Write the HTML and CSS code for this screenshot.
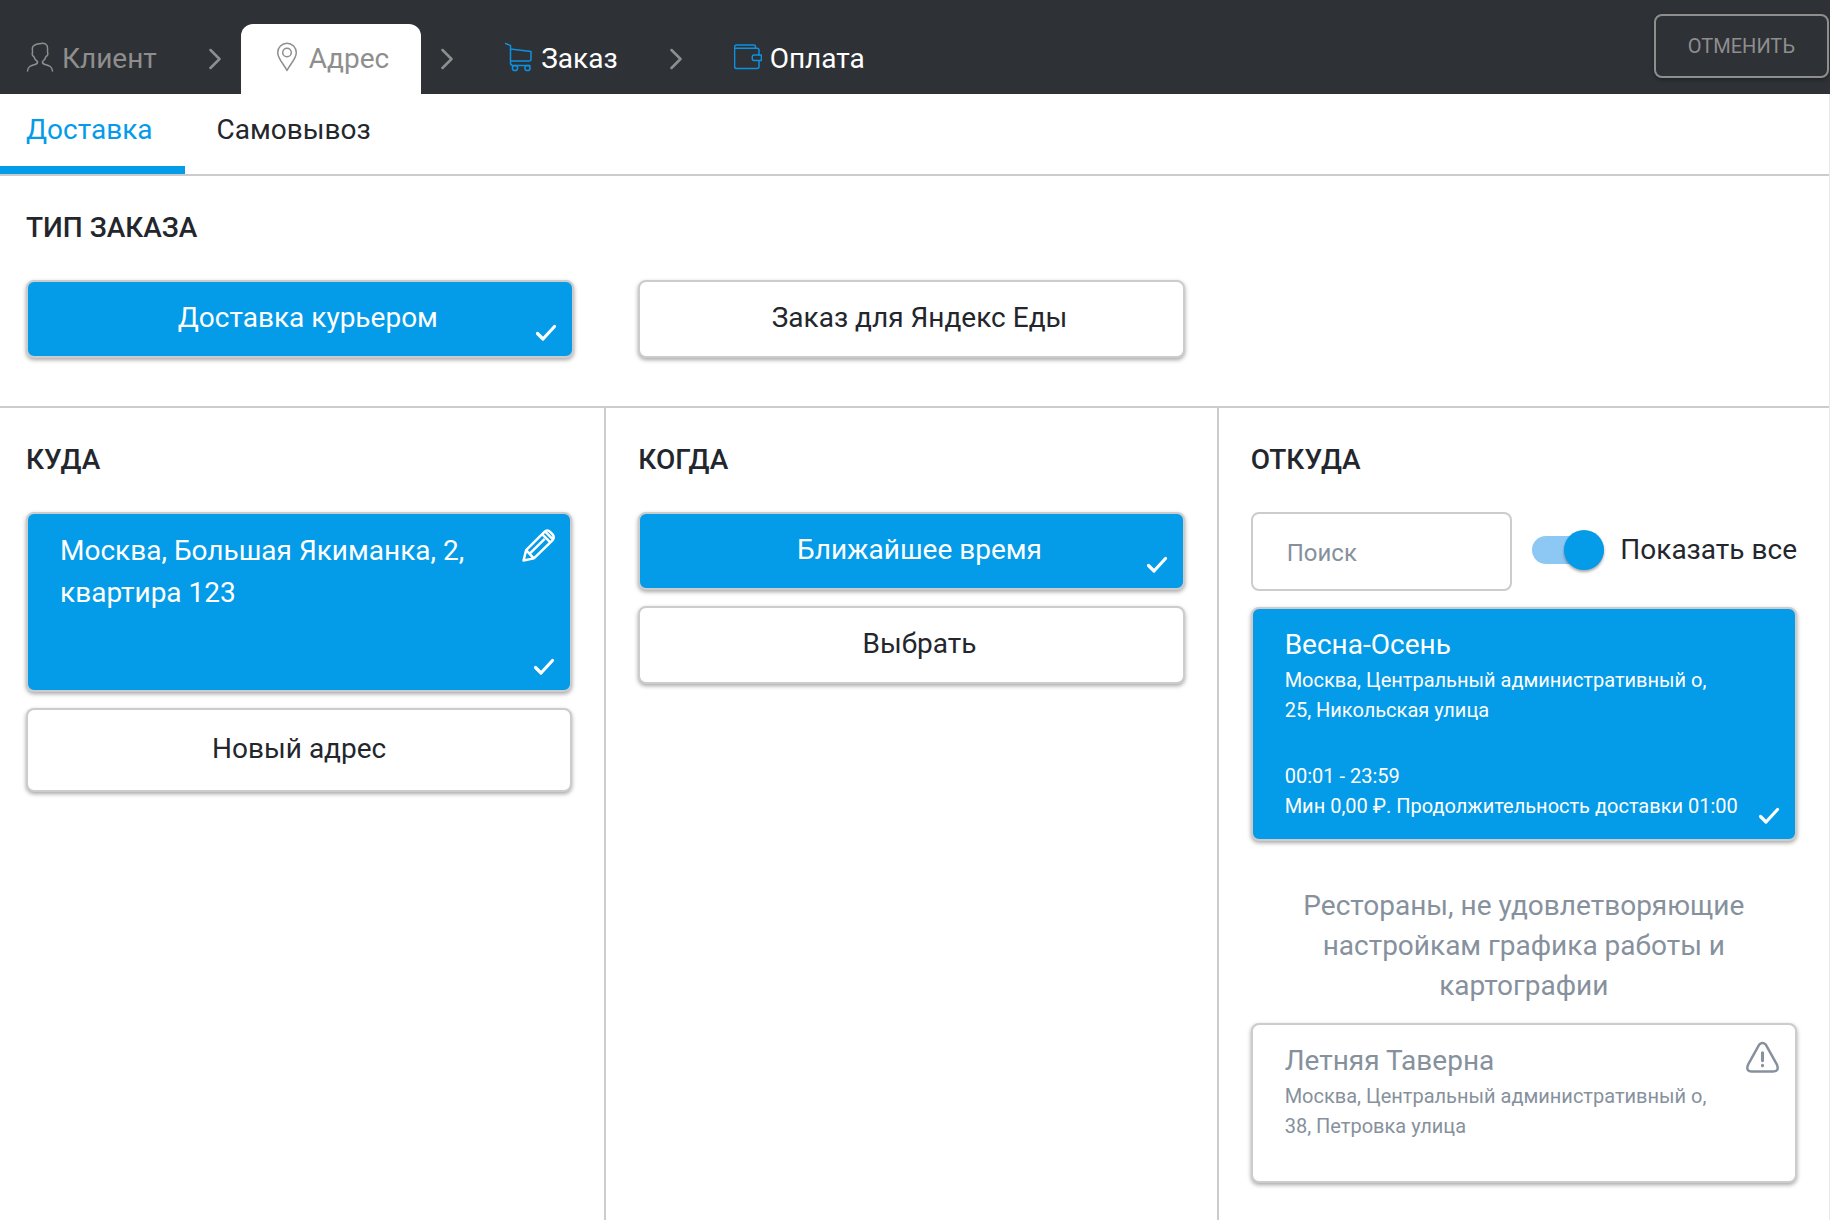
FILE: index.html
```html
<!DOCTYPE html>
<html lang="ru">
<head>
<meta charset="utf-8">
<title>Адрес заказа</title>
<meta name="viewport" content="width=device-width, initial-scale=1">
<link rel="stylesheet" href="styles.css">
</head>
<body>
<svg class="sprite" aria-hidden="true">
  <symbol id="check" viewBox="0 0 22 18"><path d="M2.500 9.500 8 15 19.500 2.500" fill="none" stroke="currentColor" stroke-width="3.200" stroke-linecap="round" stroke-linejoin="round"/></symbol>
  <symbol id="chevron" viewBox="0 0 12 22"><path d="M1.500 2 10.500 11 1.500 20" fill="none" stroke="currentColor" stroke-width="2.500" stroke-linecap="round" stroke-linejoin="round"/></symbol>
</svg>

<header class="header">
  <nav class="steps" aria-label="Шаги заказа">
    <a class="step step-done" href="#client">
      <svg class="step-icon" viewBox="0 0 28 30" aria-hidden="true"><path d="M6.500 5.500C8 1.800 12 2.200 15 1.500c3.500-.6 6.800 1 6.500 4.500.2 2-.2 3 .2 5 .4 2-.5 3-1.700 3.500-.7 2.500-2 4-3.500 5-.3 1.800.7 2.500 2.500 3 4.500 1.200 7 2 7.500 6.500M6.500 5.500c-.3 1.500 0 3 0 4.500-.6 2.500 0 4 1.300 4.500.7 2.500 2 4 3.700 5 .3 1.800-.7 2.500-2.500 3-4.500 1.200-7 2-7.500 6.500"/></svg>
      <span>Клиент</span>
    </a>
    <svg class="chevron" aria-hidden="true"><use href="#chevron"/></svg>
    <a class="step step-active" href="#address" aria-current="step">
      <svg class="step-icon" viewBox="0 0 28 30" aria-hidden="true"><path d="M14 28.500C11 22 4.700 17 4.700 10.500a9.300 9.300 0 0 1 18.600 0C23.300 17 17 22 14 28.500Z"/><circle cx="14" cy="10.500" r="4.300"/></svg>
      <span>Адрес</span>
    </a>
    <svg class="chevron" aria-hidden="true"><use href="#chevron"/></svg>
    <a class="step" href="#order">
      <svg class="step-icon" viewBox="0 0 28 30" aria-hidden="true"><path d="M.5 1.500 5.500 3.500V21q0 2.500 2.500 2.500H25M5.500 7 26 9.500V17q0 2-2 2H5.500"/><circle cx="10" cy="26" r="2.600"/><circle cx="22.500" cy="26" r="2.600"/></svg>
      <span>Заказ</span>
    </a>
    <svg class="chevron" aria-hidden="true"><use href="#chevron"/></svg>
    <a class="step" href="#payment">
      <svg class="step-icon" viewBox="0 0 28 30" aria-hidden="true"><path d="M21.500 6V4.500Q21.500 3 20 3H2.500Q.6 3 .6 5V24.500q0 2 2 2H23q2 0 2-2V18.500M.6 5.500Q1 6.300 3 6.300H23q2 0 2 2V13"/><path d="M20 13h7.400v5.500H20q-1.700 0-1.700-1.500v-2.500Q18.300 13 20 13Z"/></svg>
      <span>Оплата</span>
    </a>
  </nav>
  <button class="cancel" type="button">ОТМЕНИТЬ</button>
</header>

<main class="main">
  <nav class="tabs" aria-label="Способ получения">
    <a class="tab tab-active" href="#delivery" aria-current="page">Доставка</a>
    <a class="tab" href="#pickup">Самовывоз</a>
  </nav>

  <section class="order-type">
    <h2 class="title">ТИП ЗАКАЗА</h2>
    <div class="type-grid">
      <button class="option selected" type="button">Доставка курьером<svg class="check" aria-hidden="true"><use href="#check"/></svg></button>
      <button class="option" type="button">Заказ для Яндекс Еды</button>
    </div>
  </section>

  <div class="columns">
    <section class="column">
      <h2 class="title">КУДА</h2>
      <div class="stack">
        <article class="card card-address selected">
          <p class="address">Москва, Большая Якиманка, 2, квартира 123</p>
          <button class="corner-button" type="button" aria-label="Изменить адрес">
            <svg class="corner-icon" viewBox="0 0 32 32" aria-hidden="true"><path d="M1.500 30.500 4 20.500 21.500 3Q24.500 0 27.500 3L29.500 5Q32 8 29.500 11L11.500 28.500ZM4 20.500 11.500 28.500M19.500 5 27.500 13M22.500 2.500 30 10M8 23.500 22 9.500"/></svg>
          </button>
          <svg class="check" aria-hidden="true"><use href="#check"/></svg>
        </article>
        <button class="option option-new" type="button">Новый адрес</button>
      </div>
    </section>

    <section class="column">
      <h2 class="title">КОГДА</h2>
      <div class="stack">
        <button class="option selected" type="button">Ближайшее время<svg class="check" aria-hidden="true"><use href="#check"/></svg></button>
        <button class="option" type="button">Выбрать</button>
      </div>
    </section>

    <section class="column">
      <h2 class="title">ОТКУДА</h2>
      <div class="stack">
        <div class="filter">
          <input class="search" type="search" placeholder="Поиск" aria-label="Поиск">
          <label class="switch"><input class="switch-input" type="checkbox" role="switch" checked><span>Показать все</span></label>
        </div>
        <article class="card card-open selected">
          <h3 class="place">Весна-Осень</h3>
          <p class="details">Москва, Центральный административный о, 25, Никольская улица</p>
          <p class="terms">00:01 - 23:59<br>Мин 0,00 ₽. Продолжительность доставки 01:00</p>
          <svg class="check" aria-hidden="true"><use href="#check"/></svg>
        </article>
      </div>
      <p class="note">Рестораны, не удовлетворяющие настройкам графика работы и картографии</p>
      <article class="card card-closed">
        <h3 class="place">Летняя Таверна</h3>
        <p class="details">Москва, Центральный административный о, 38, Петровка улица</p>
        <svg class="corner-icon corner-warning" viewBox="0 0 32 32" aria-hidden="true"><path d="M12.800 3.500Q16 .2 19.200 3.500L30 23q2.500 6.500-3.500 6.500H5.500Q-.5 29.500 2 23Z"/><path d="M16 11.500v7.500M16 23.500v.5" stroke-width="3" stroke-linecap="round"/></svg>
      </article>
    </section>
  </div>
</main>
</body>
</html>
```
FILE: styles.css
```css
*, *::before, *::after { box-sizing: border-box; }

html { height: 100%; }

body {
  display: flex;
  flex-direction: column;
  min-height: 100%;
  margin: 0;
  background: #fff;
  color: #23262c;
  font: 400 28px/40px Roboto, "Liberation Sans", sans-serif;
}

h2, h3, p { margin: 0; }
a { color: inherit; text-decoration: none; }
button, input { font: inherit; color: inherit; }
button { cursor: pointer; }
.sprite { display: none; }

/* Header */
.header {
  display: flex;
  justify-content: space-between;
  align-items: flex-start;
  background: #2e3136;
}

.steps {
  display: flex;
  align-items: center;
  padding-top: 24px;
  color: #fff;
}

.step {
  display: flex;
  align-items: center;
  gap: 8px;
  height: 70px;
  padding: 0 32px;
}
.step:first-child { padding-left: 26px; }
.step-done { color: #8e8e8e; }
.step-active {
  border-radius: 12px 12px 0 0;
  background: #fff;
  color: #8e8e8e;
}

.step-icon {
  width: 28px;
  height: 30px;
  margin-bottom: 4px;
  fill: none;
  stroke: #0c92e0;
  stroke-width: 1.5;
  stroke-linejoin: round;
  stroke-linecap: round;
}
.step-done .step-icon, .step-active .step-icon { stroke: #8e8e8e; }

.chevron {
  width: 12px;
  height: 22px;
  margin: 0 20px;
  color: #8e8e8e;
}

.cancel {
  height: 64px;
  margin: 14px 1px 0 0;
  padding: 0 32px;
  border: 2px solid #8e8e8e;
  border-radius: 8px;
  background: transparent;
  box-shadow: 0 2px 4px rgba(0, 0, 0, .3);
  color: #8e8e8e;
  font-size: 20px;
}

/* Tabs */
.main {
  display: flex;
  flex-direction: column;
  flex: 1;
  border-right: 1px solid #e8e8e8;
}

.tabs {
  display: flex;
  border-bottom: 2px solid #ccc;
}
.tab {
  height: 80px;
  padding: 16px 32px 0;
  border-bottom: 8px solid transparent;
}
.tab:first-child { padding-left: 26px; }
.tab-active {
  border-bottom-color: #049be8;
  color: #049be8;
}

/* Sections */
.title {
  margin-bottom: 32px;
  font-size: 28px;
  font-weight: 500;
  line-height: 40px;
}

.order-type {
  padding: 32px 32px 48px 26px;
  border-bottom: 2px solid #ccc;
}
.type-grid {
  display: grid;
  grid-template-columns: repeat(3, 1fr);
  gap: 64px;
}

.columns {
  display: flex;
  flex: 1;
}
.column {
  flex: 1 1 0;
  min-width: 0;
  padding: 32px;
}
.column:first-child { padding-left: 26px; }
.column + .column { border-left: 2px solid #ccc; }
.stack {
  display: flex;
  flex-direction: column;
  gap: 16px;
}

/* Options and cards */
.option, .card {
  position: relative;
  border: 2px solid #ccc;
  border-radius: 8px;
  background: #fff;
  box-shadow: 0 2px 4px rgba(0, 0, 0, .35);
}
.option {
  width: 100%;
  height: 78px;
  padding: 0 32px 2px 48px;
}
.option-new {
  height: 84px;
  padding-left: 32px;
}
.option.selected, .card.selected {
  background: #049be8;
  color: #fff;
}
.card { padding: 16px 32px; }

.check {
  position: absolute;
  right: 15px;
  bottom: 14px;
  width: 22px;
  height: 18px;
}

.card-address {
  min-height: 180px;
  padding-right: 96px;
}
.address { line-height: 42px; }

.corner-button {
  position: absolute;
  top: 15px;
  right: 15px;
  display: flex;
  padding: 0;
  border: 0;
  background: none;
}
.corner-icon {
  width: 33px;
  height: 33px;
  fill: none;
  stroke: currentColor;
  stroke-width: 2.400;
  stroke-linejoin: round;
}
.corner-warning {
  position: absolute;
  top: 16px;
  right: 16px;
}

/* Restaurant search */
.filter {
  display: flex;
  align-items: center;
  gap: 20px;
}
.search {
  flex: 1;
  min-width: 0;
  height: 79px;
  padding: 2px 34px 0;
  border: 2px solid #ccc;
  border-radius: 8px;
  background: #fff;
  font-size: 24px;
}
.search::placeholder { color: #86919d; opacity: 1; }

.switch {
  display: flex;
  align-items: center;
  gap: 16px;
  padding-bottom: 3px;
  white-space: nowrap;
}
.switch-input {
  position: relative;
  appearance: none;
  width: 72px;
  height: 28px;
  margin: 0;
  border-radius: 14px;
  background: #8dc8f4;
}
.switch-input::before {
  content: "";
  position: absolute;
  top: -6px;
  right: 0;
  width: 40px;
  height: 40px;
  border-radius: 50%;
  background: #049be8;
  box-shadow: 0 2px 3px rgba(0, 0, 0, .35);
}

.place {
  font-size: 28px;
  font-weight: 400;
  line-height: 40px;
}
.details, .terms {
  font-size: 20px;
  line-height: 30px;
}
.details { padding-right: 48px; }
.terms { margin-top: 36px; }
.card-open { min-height: 234px; }
.card-closed {
  min-height: 160px;
  color: #86919d;
}

.note {
  padding: 45px 32px 17px;
  color: #86919d;
  text-align: center;
}
```
